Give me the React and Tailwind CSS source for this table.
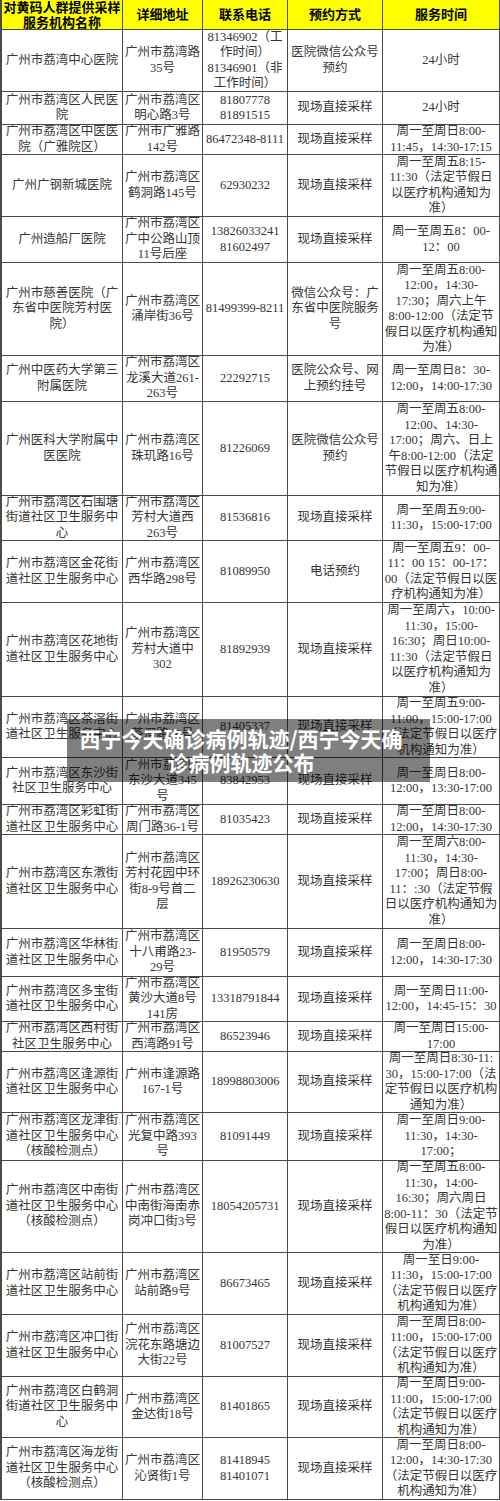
const rows = [
  { h: "h-[62px]", c: ["广州市荔湾中心医院", "广州市荔湾路\n35号", "81346902（工\n作时间）\n81346901（非\n工作时间）", "医院微信公众号\n预约", "24小时"] },
  { h: "h-[33px]", c: ["广州市荔湾区人民医\n院", "广州市荔湾区\n明心路3号", "81807778\n81891515", "现场直接采样", "24小时"] },
  { h: "h-[30px]", c: ["广州市荔湾区中医医\n院（广雅院区）", "广州市广雅路\n142号", "86472348-8111", "现场直接采样", "周一至周日8:00-\n11:45，14:30-17:15"] },
  { h: "h-[62px]", c: ["广州广钢新城医院", "广州市荔湾区\n鹤洞路145号", "62930232", "现场直接采样", "周一至周五8:15-\n11:30（法定节假日\n以医疗机构通知为\n准）"] },
  { h: "h-[46px]", c: ["广州造船厂医院", "广州市荔湾区\n广中公路山顶\n11号后座", "13826033241\n81602497", "现场直接采样", "周一至周五8：00-\n12：00"] },
  { h: "h-[93px]", c: ["广州市慈善医院（广\n东省中医院芳村医\n院）", "广州市荔湾区\n涌岸街36号", "81499399-8211", "微信公众号：广\n东省中医院服务\n号", "周一至周五8:00-\n12:00，14:30-\n17:30；周六上午\n8:00-12:00（法定节\n假日以医疗机构通知\n为准）"] },
  { h: "h-[46px]", c: ["广州中医药大学第三\n附属医院", "广州市荔湾区\n龙溪大道261-\n263号", "22292715", "医院公众号、网\n上预约挂号", "周一至周日8：30-\n12:00，14:00-17:30"] },
  { h: "h-[94px]", c: ["广州医科大学附属中\n医医院", "广州市荔湾区\n珠玑路16号", "81226069", "医院微信公众号\n预约", "周一至周五8:00-\n12:00、14:30-\n17:00；周六、日上\n午8:00-12:00（法定\n节假日以医疗机构通\n知为准）"] },
  { h: "h-[45px]", c: ["广州市荔湾区石围塘\n街道社区卫生服务中\n心", "广州市荔湾区\n芳村大道西\n263号", "81536816", "现场直接采样", "周一至周五9:00-\n11:30，15:00-17:00"] },
  { h: "h-[62px]", c: ["广州市荔湾区金花街\n道社区卫生服务中心", "广州市荔湾区\n西华路298号", "81089950", "电话预约", "周一至周五9：00-\n11：00 15：00-17：\n00（法定节假日以医\n疗机构通知为准）"] },
  { h: "h-[94px]", c: ["广州市荔湾区花地街\n道社区卫生服务中心", "广州市荔湾区\n芳村大道中\n302", "81892939", "现场直接采样", "周一至周六，10:00-\n11:30，15:00-\n16:30；周日10:00-\n11:30（法定节假日\n以医疗机构通知为\n准）"] },
  { h: "h-[61px]", c: ["广州市荔湾区茶滘街\n道社区卫生服务中心", "广州市荔湾区\n茶滘路28号", "81405337", "现场直接采样", "周一至周五9:00-\n11:00，15:00-17:00\n（法定节假日以医疗\n机构通知为准）"] },
  { h: "h-[47px]", c: ["广州市荔湾区东沙街\n社区卫生服务中心", "广州市荔湾区\n东沙大道345\n号", "83842953", "现场直接采样", "周一至周日8:00-\n12:00，13:30-17:00"] },
  { h: "h-[30px]", c: ["广州市荔湾区彩虹街\n道社区卫生服务中心", "广州市荔湾区\n周门路36-1号", "81035423", "现场直接采样", "周一至周日8:00-\n12:00，14:30-17:30"] },
  { h: "h-[94px]", c: ["广州市荔湾区东漖街\n道社区卫生服务中心", "广州市荔湾区\n芳村花园中环\n街8-9号首二\n层", "18926230630", "现场直接采样", "周一至周六8:00-\n11:30，14:30-\n17:00；周日8:00-\n11：:30（法定节假\n日以医疗机构通知为\n准）"] },
  { h: "h-[48px]", c: ["广州市荔湾区华林街\n道社区卫生服务中心", "广州市荔湾区\n十八甫路23-\n29号", "81950579", "现场直接采样", "周一至周日8:00-\n12:00，14:30-17:30"] },
  { h: "h-[45px]", c: ["广州市荔湾区多宝街\n道社区卫生服务中心", "广州市荔湾区\n黄沙大道8号\n141房", "13318791844", "现场直接采样", "周一至周日11:00-\n12:00，14:45-15：30"] },
  { h: "h-[30px]", c: ["广州市荔湾区西村街\n社区卫生服务中心", "广州市荔湾区\n西湾路91号", "86523946", "现场直接采样", "周一至周日15:00-\n17:00"] },
  { h: "h-[61px]", c: ["广州市荔湾区逢源街\n道社区卫生服务中心", "广州市逢源路\n167-1号", "18998803006", "现场直接采样", "周一至周日8:30-11:\n30，15:00-17:00（法\n定节假日以医疗机构\n通知为准）"] },
  { h: "h-[48px]", c: ["广州市荔湾区龙津街\n道社区卫生服务中心\n（核酸检测点）", "广州市荔湾区\n光复中路393\n号", "81091449", "现场直接采样", "周一至周日9:00-\n11:30，14:30-\n17:00；"] },
  { h: "h-[92px]", c: ["广州市荔湾区中南街\n道社区卫生服务中心\n（核酸检测点）", "广州市荔湾区\n中南街海南赤\n岗冲口街3号", "18054205731", "现场直接采样", "周一至周五8:00-\n11:30，14:00-\n16:30；周六周日\n8:00-11：30（法定节\n假日以医疗机构通知\n为准）"] },
  { h: "h-[62px]", c: ["广州市荔湾区站前街\n道社区卫生服务中心", "广州市荔湾区\n站前路9号", "86673465", "现场直接采样", "周一至日9:00-\n11:30，15:00-17:00\n（法定节假日以医疗\n机构通知为准）"] },
  { h: "h-[62px]", c: ["广州市荔湾区冲口街\n道社区卫生服务中心", "广州市荔湾区\n浣花东路塘边\n大街22号", "81007527", "现场直接采样", "周一至周日8:00-\n11:00，15:00-17:00\n（法定节假日以医疗\n机构通知为准）"] },
  { h: "h-[61px]", c: ["广州市荔湾区白鹤洞\n街道社区卫生服务中\n心", "广州市荔湾区\n金达街18号", "81401865", "现场直接采样", "周一至周日9:00-\n11:00，15:00-17:00\n（法定节假日以医疗\n机构通知为准）"] },
  { h: "h-[62px]", c: ["广州市荔湾区海龙街\n道社区卫生服务中心\n（核酸检测点）", "广州市荔湾区\n沁贤街1号", "81418945\n81401071", "现场直接采样", "周一至周日8:00-\n12:00，14:30-17:30\n（法定节假日以医疗\n机构通知为准）"] },
];

const header = ["对黄码人群提供采样\n服务机构名称", "详细地址", "联系电话", "预约方式", "服务时间"];

const cols = "grid grid-cols-[123px_80px_85px_95px_117px]";
const cell = "flex items-center justify-center text-center whitespace-pre border-r border-b border-[#4a4a4a] overflow-hidden";

export default function App() {
  return (
    <div className="relative w-[500px] h-[1501px] bg-white font-['Liberation_Serif','Noto_Sans_CJK_SC',serif]">
      <div className={`${cols} h-[30px] bg-[#ffff00] text-black font-bold text-[13px] leading-[15px]`}>
        {header.map((t, i) => (
          <div key={i} className={`${cell} ${i === 0 ? "border-l-2" : ""}`}>{t}</div>
        ))}
      </div>
      {rows.map((r, ri) => (
        <div key={ri} className={`${cols} ${r.h} text-[12.5px] leading-[15.5px] text-[#363636]`}>
          {r.c.map((t, i) => (
            <div key={i} className={`${cell} ${i === 0 ? "border-l-2" : ""}`}>{t}</div>
          ))}
        </div>
      ))}

      {/* 标题浮层 */}
      <div className="absolute left-[67px] top-[719px] w-[363px] h-[63px] bg-black/50 pl-[11px] pt-[7px]">
        <div className="w-[326px] text-center text-white font-bold text-[21px] leading-[24px] whitespace-pre font-['Noto_Sans_CJK_SC',sans-serif]">
          {"西宁今天确诊病例轨迹/西宁今天确\n诊病例轨迹公布"}
        </div>
      </div>
    </div>
  );
}
